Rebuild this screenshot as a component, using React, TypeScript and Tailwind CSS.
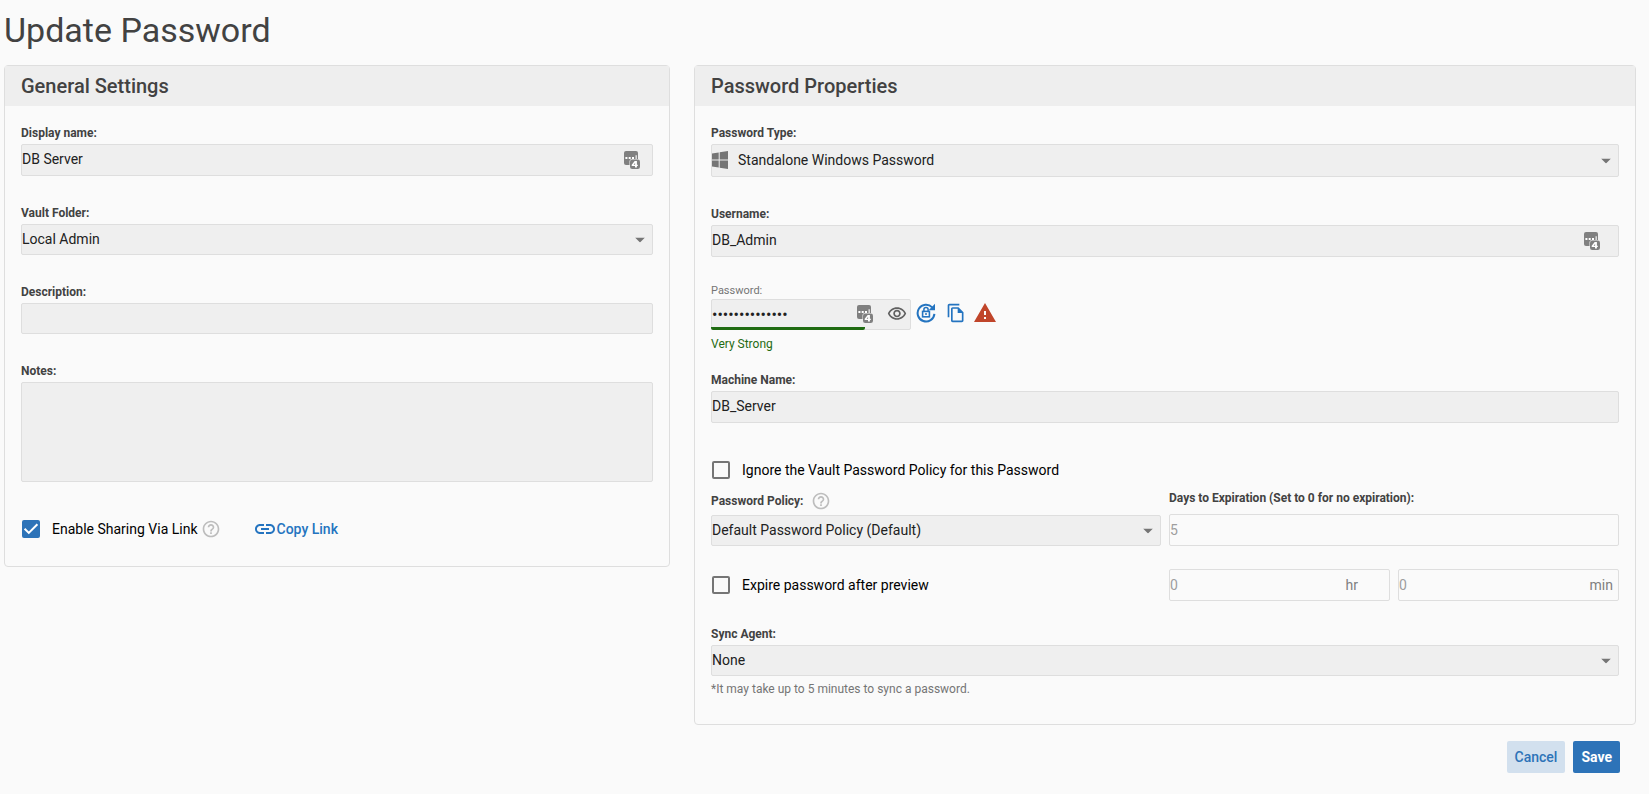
import React, { useId, useState } from "react";
import { MdLink, MdHelpOutline, MdOutlineFileCopy, MdOutlineVisibility, MdWarning } from "react-icons/md";

const fieldBase =
  "block w-full rounded-xs border border-[#dedede] bg-[#efefef] pb-0.5 text-sm text-[#212121] outline-none focus:border-[#2d73b8]";
const labelBase = "mb-[3px] block text-xs/4 font-bold text-[#424242]";
const disabledField =
  "block h-8 w-full rounded-xs border border-[#dedede] bg-transparent text-sm text-[#9e9e9e] outline-none";

function KeeperIcon({ className = "" }: { className?: string }) {
  return (
    <svg viewBox="0 0 16 18" className={`h-[18px] w-4 ${className}`} aria-hidden="true">
      <rect x="0" y="0" width="14" height="14" rx="2" fill="#808080" />
      <rect x="5.5" y="8" width="11" height="11" rx="2.5" fill="#efefef" />
      <rect x="6" y="8.5" width="10" height="9.5" rx="2.2" fill="#808080" />
      <path d="M1.4 6h2v2h-2zM4.7 6h2v2h-2zM8 6h2v2H8zM11.6 4.2h1.1v3.8h-1.1z" fill="#fff" />
      <path d="M10.7 10h2.2v3.7h.9v1.4h-.9v1.5h-1.9v-1.5H7.7v-1.3zm.4 3.8v-1.9l-1.5 1.9z" fill="#fff" />
    </svg>
  );
}

function WindowsIcon({ className = "" }: { className?: string }) {
  return (
    <svg viewBox="0 0 16 18" className={`h-[18px] w-4 ${className}`} fill="#757575" aria-hidden="true">
      <path d="M0 2.5L6.7 1.5v7H0zM7.7 1.3L16 0v8.5H7.7zM0 9.5h6.7v7L0 15.5zM7.7 9.5H16V18l-8.3-1.3z" />
    </svg>
  );
}

function Caret() {
  return (
    <svg viewBox="0 0 10 5" className="pointer-events-none absolute top-1/2 right-2 h-[5px] w-2.5 -translate-y-1/2" aria-hidden="true">
      <path d="M0 0h10L5 5z" fill="#757575" />
    </svg>
  );
}

function LockResetIcon() {
  return (
    <svg viewBox="0 0 20 20" className="size-5" fill="none" stroke="#2474c0" aria-hidden="true">
      <path d="M16.2 4.4A8.4 8.4 0 1 0 18.4 10.8" strokeWidth="2" />
      <path d="M19 0.8v6.4H12.6z" fill="#2474c0" stroke="none" />
      <rect x="6.6" y="8.4" width="6.8" height="5.4" strokeWidth="1.6" />
      <path d="M7.9 8.4V6.5a2.1 2.1 0 0 1 4.2 0v1.9" strokeWidth="1.5" />
      <circle cx="10" cy="11.1" r="1" fill="#2474c0" stroke="none" />
    </svg>
  );
}

function TextField({
  label,
  value,
  managerClass,
  heightClass = "h-8",
}: {
  label: string;
  value?: string;
  managerClass?: string;
  heightClass?: string;
}) {
  const id = useId();
  return (
    <div>
      <label htmlFor={id} className={labelBase}>{label}</label>
      <div className="relative">
        <input id={id} type="text" defaultValue={value} className={`${fieldBase} ${heightClass}`} />
        {managerClass && <KeeperIcon className={`absolute top-[7px] ${managerClass}`} />}
      </div>
    </div>
  );
}

function SelectField({ label, options, icon }: { label: string; options: string[]; icon?: React.ReactNode }) {
  const id = useId();
  return (
    <div>
      <label htmlFor={id} className={labelBase}>{label}</label>
      <div className="relative">
        {icon}
        <select id={id} className={`${fieldBase} appearance-none ${icon ? "h-[33px] pl-[26px]" : "h-[31px]"}`}>
          {options.map((o) => <option key={o}>{o}</option>)}
        </select>
        <Caret />
      </div>
    </div>
  );
}

function Check({ label, checked = false }: { label: string; checked?: boolean }) {
  const [on, setOn] = useState(checked);
  return (
    <label className="flex items-center gap-3 pl-px text-sm/5 text-black">
      <span className="relative size-[18px]">
        <input
          type="checkbox"
          checked={on}
          onChange={(e) => setOn(e.target.checked)}
          className="block size-[18px] appearance-none rounded-xs border-2 border-[#757575] checked:border-[#2d73b8] checked:bg-[#2d73b8]"
        />
        {on && (
          <svg viewBox="0 0 18 18" className="pointer-events-none absolute inset-0" aria-hidden="true">
            <path d="M2.6 8.8l4.2 4.1 8.6-8.6" fill="none" stroke="#fff" strokeWidth="2" />
          </svg>
        )}
      </span>
      {label}
    </label>
  );
}

function Panel({ title, className, children }: { title: string; className: string; children: React.ReactNode }) {
  return (
    <section className={`rounded-sm border border-[#dedede] ${className}`}>
      <h2 className="bg-[#eeeeee] px-4 py-1.5 text-xl/7 font-medium text-[#424242]">{title}</h2>
      <div className="px-4 pt-[19px]">{children}</div>
    </section>
  );
}

export default function App() {
  return (
    <main className="min-h-screen bg-[#fafafa] pr-[13px] pb-5 pl-1 font-[Roboto,sans-serif]">
      <h1 className="pt-2.5 pb-[15px] text-[34px]/10 font-normal text-[#424242]">Update Password</h1>

      <div className="grid grid-cols-12 items-start gap-6">
        <Panel title="General Settings" className="col-span-5">
          <div className="flex flex-col gap-[29px]">
            <TextField label="Display name:" value="DB Server" managerClass="right-[13px]" />
            <SelectField label="Vault Folder:" options={["Local Admin"]} />
            <TextField label="Description:" heightClass="h-[31px]" />
            <div>
              <label htmlFor="notes" className={labelBase}>Notes:</label>
              <textarea id="notes" className={`${fieldBase} h-[100px] resize-none`} />
            </div>
          </div>
          <div className="flex items-center pt-[35px] pb-[25px]">
            <Check label="Enable Sharing Via Link" checked />
            <MdHelpOutline className="ml-[3px] size-5 text-[#bdbdbd]" />
            <a href="#link" className="ml-8 flex items-center text-sm/5 font-medium text-[#2474c0]">
              <MdLink className="size-6" />
              Copy Link
            </a>
          </div>
        </Panel>

        <Panel title="Password Properties" className="col-span-7">
          <div className="flex flex-col gap-[29px]">
            <SelectField
              label="Password Type:"
              options={["Standalone Windows Password"]}
              icon={<WindowsIcon className="pointer-events-none absolute top-[7px] left-px" />}
            />
            <TextField label="Username:" value="DB_Admin" managerClass="right-[19px]" />
          </div>

          <div className="pt-[26px]">
            <label htmlFor="password" className="block text-[11px]/4 text-[#757575]">Password:</label>
            <div className="flex items-start">
              <div className="relative w-[200px]">
                <input
                  id="password"
                  type="password"
                  defaultValue="Vault-Key-2041"
                  className="block h-[31px] w-full rounded-xs border border-[#dedede] bg-[#efefef] text-base text-[#212121] outline-none"
                />
                <KeeperIcon className="absolute top-1.5 left-[146px]" />
                <button type="button" aria-label="Show password" className="absolute top-[5px] left-[176px] text-[#616161]">
                  <MdOutlineVisibility className="size-5" />
                </button>
                <span className="absolute bottom-0 left-0 h-[3px] w-[154px] rounded-b-xs bg-[#1f6b12]" />
              </div>
              <div className="flex h-7 items-center pl-[5px]">
                <button type="button" aria-label="Generate password"><LockResetIcon /></button>
                <button type="button" aria-label="Copy password" className="ml-2.5 text-[#2474c0]">
                  <MdOutlineFileCopy className="size-5" />
                </button>
                <MdWarning className="ml-[7px] size-6 text-[#c0452a]" />
              </div>
            </div>
            <p className="pt-1.5 text-xs/4 text-[#1f6b12]">Very Strong</p>
          </div>

          <div className="pt-5">
            <TextField label="Machine Name:" value="DB_Server" />
          </div>

          <div className="pt-[37px]">
            <Check label="Ignore the Vault Password Policy for this Password" />
          </div>

          <div className="grid grid-cols-2 items-end gap-x-2 pt-2.5">
            <div>
              <div className="mb-1 flex items-center gap-2">
                <label htmlFor="policy" className="text-xs/4 font-bold text-[#424242]">Password Policy:</label>
                <MdHelpOutline className="size-5 text-[#bdbdbd]" />
              </div>
              <div className="relative">
                <select id="policy" className={`${fieldBase} h-[31px] appearance-none`}>
                  <option>Default Password Policy (Default)</option>
                </select>
                <Caret />
              </div>
            </div>
            <div>
              <label htmlFor="days" className="mb-2 block text-xs/4 font-bold text-[#424242]">
                Days to Expiration (Set to 0 for no expiration):
              </label>
              <input id="days" type="text" disabled value="5" className={disabledField} />
            </div>
          </div>

          <div className="grid grid-cols-2 items-center gap-x-2 pt-[23px]">
            <Check label="Expire password after preview" />
            <div className="grid grid-cols-2 gap-2">
              <div className="relative">
                <input aria-label="Hours" type="text" disabled value="0" className={disabledField} />
                <span className="absolute top-1.5 right-8 text-sm/5 text-[#808080]">hr</span>
              </div>
              <div className="relative">
                <input aria-label="Minutes" type="text" disabled value="0" className={disabledField} />
                <span className="absolute top-1.5 right-1.5 text-sm/5 text-[#808080]">min</span>
              </div>
            </div>
          </div>

          <div className="pt-[25px] pb-[27px]">
            <SelectField label="Sync Agent:" options={["None"]} />
            <p className="pt-[5px] text-xs/4 text-[#757575]">*It may take up to 5 minutes to sync a password.</p>
          </div>
        </Panel>
      </div>

      <div className="flex justify-end gap-2 pt-4 pr-4 text-sm/5">
        <button type="button" className="rounded-xs bg-[#d2e0ee] px-2 py-1.5 font-medium text-[#2d73b8]">Cancel</button>
        <button type="button" className="rounded-xs bg-[#2d73b8] px-2 py-1.5 font-bold text-white">Save</button>
      </div>
    </main>
  );
}
